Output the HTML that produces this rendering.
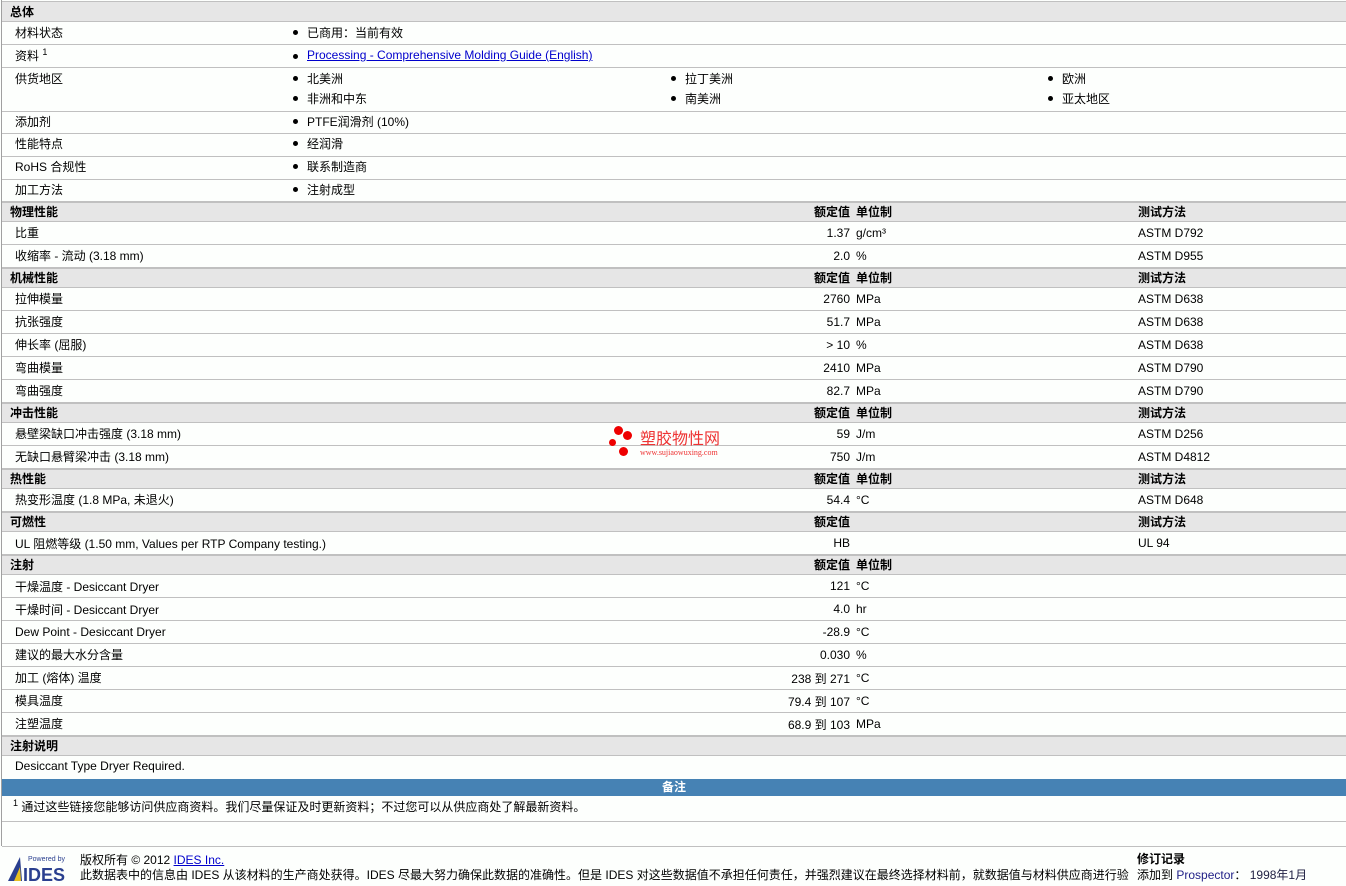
<!DOCTYPE html>
<html><head><meta charset="utf-8"><style>
body{margin:0;width:1346px;height:886px;overflow:hidden;background:#fdfffd;font-family:"Liberation Sans","Noto Sans CJK SC",sans-serif;font-size:12px;color:#000;position:relative}
.r{position:absolute;left:2px;width:1344px;border-bottom:1px solid #c0c0c0;box-sizing:border-box}
.h{background:#e6e6e6;font-weight:bold;border-top:1px solid #c0c0c0}
.t{position:absolute;white-space:nowrap;margin-top:-2px}
.v{position:absolute;right:496px;white-space:nowrap;text-align:right;margin-top:-2px}
.b::before{content:"";position:absolute;left:-14px;top:6px;width:5px;height:5px;border-radius:50%;background:#000}
a{color:#00c;text-decoration:underline}
#lb{position:absolute;left:1px;top:0;width:1px;height:846px;background:#a0a0a0}
</style></head><body>
<div id="lb"></div>
<div class="r h" style="top:1px;height:21px"><span class="t" style="left:8px;top:3px">总体</span></div>
<div class="r" style="top:22px;height:23px"><span class="t" style="left:13px;top:4px">材料状态</span><span class="t b" style="left:305px;top:4px">已商用：当前有效</span></div>
<div class="r" style="top:45px;height:23px"><span class="t" style="left:13px;top:4px">资料 <sup style="font-size:9px">1</sup></span><span class="t b" style="left:305px;top:5px"><a>Processing - Comprehensive Molding Guide (English)</a></span></div>
<div class="r" style="top:68px;height:44px"><span class="t" style="left:13px;top:4px">供货地区</span>
<span class="t b" style="left:305px;top:4px">北美洲</span><span class="t b" style="left:683px;top:4px">拉丁美洲</span><span class="t b" style="left:1060px;top:4px">欧洲</span>
<span class="t b" style="left:305px;top:24px">非洲和中东</span><span class="t b" style="left:683px;top:24px">南美洲</span><span class="t b" style="left:1060px;top:24px">亚太地区</span></div>
<div class="r" style="top:112px;height:22px"><span class="t" style="left:13px;top:3px">添加剂</span><span class="t b" style="left:305px;top:3px">PTFE润滑剂 (10%)</span></div>
<div class="r" style="top:134px;height:23px"><span class="t" style="left:13px;top:3px">性能特点</span><span class="t b" style="left:305px;top:3px">经润滑</span></div>
<div class="r" style="top:157px;height:23px"><span class="t" style="left:13px;top:3px">RoHS 合规性</span><span class="t b" style="left:305px;top:3px">联系制造商</span></div>
<div class="r" style="top:180px;height:22px"><span class="t" style="left:13px;top:3px">加工方法</span><span class="t b" style="left:305px;top:3px">注射成型</span></div>

<div class="r h" style="top:202px;height:20px"><span class="t" style="left:8px;top:2px">物理性能</span><span class="v" style="top:2px">额定值</span><span class="t" style="left:854px;top:2px">单位制</span><span class="t" style="left:1136px;top:2px">测试方法</span></div>
<div class="r" style="top:222px;height:23px"><span class="t" style="left:13px;top:4px">比重</span><span class="v" style="top:6px">1.37</span><span class="t" style="left:854px;top:6px">g/cm³</span><span class="t" style="left:1136px;top:6px">ASTM D792</span></div>
<div class="r" style="top:245px;height:23px"><span class="t" style="left:13px;top:4px">收缩率 - 流动 (3.18 mm)</span><span class="v" style="top:6px">2.0</span><span class="t" style="left:854px;top:6px">%</span><span class="t" style="left:1136px;top:6px">ASTM D955</span></div>

<div class="r h" style="top:268px;height:20px"><span class="t" style="left:8px;top:2px">机械性能</span><span class="v" style="top:2px">额定值</span><span class="t" style="left:854px;top:2px">单位制</span><span class="t" style="left:1136px;top:2px">测试方法</span></div>
<div class="r" style="top:288px;height:23px"><span class="t" style="left:13px;top:4px">拉伸模量</span><span class="v" style="top:6px">2760</span><span class="t" style="left:854px;top:6px">MPa</span><span class="t" style="left:1136px;top:6px">ASTM D638</span></div>
<div class="r" style="top:311px;height:23px"><span class="t" style="left:13px;top:4px">抗张强度</span><span class="v" style="top:6px">51.7</span><span class="t" style="left:854px;top:6px">MPa</span><span class="t" style="left:1136px;top:6px">ASTM D638</span></div>
<div class="r" style="top:334px;height:23px"><span class="t" style="left:13px;top:4px">伸长率 (屈服)</span><span class="v" style="top:6px">&gt; 10</span><span class="t" style="left:854px;top:6px">%</span><span class="t" style="left:1136px;top:6px">ASTM D638</span></div>
<div class="r" style="top:357px;height:23px"><span class="t" style="left:13px;top:4px">弯曲模量</span><span class="v" style="top:6px">2410</span><span class="t" style="left:854px;top:6px">MPa</span><span class="t" style="left:1136px;top:6px">ASTM D790</span></div>
<div class="r" style="top:380px;height:23px"><span class="t" style="left:13px;top:4px">弯曲强度</span><span class="v" style="top:6px">82.7</span><span class="t" style="left:854px;top:6px">MPa</span><span class="t" style="left:1136px;top:6px">ASTM D790</span></div>

<div class="r h" style="top:403px;height:20px"><span class="t" style="left:8px;top:2px">冲击性能</span><span class="v" style="top:2px">额定值</span><span class="t" style="left:854px;top:2px">单位制</span><span class="t" style="left:1136px;top:2px">测试方法</span></div>
<div class="r" style="top:423px;height:23px"><span class="t" style="left:13px;top:4px">悬壁梁缺口冲击强度 (3.18 mm)</span><span class="v" style="top:6px">59</span><span class="t" style="left:854px;top:6px">J/m</span><span class="t" style="left:1136px;top:6px">ASTM D256</span></div>
<div class="r" style="top:446px;height:23px"><span class="t" style="left:13px;top:4px">无缺口悬臂梁冲击 (3.18 mm)</span><span class="v" style="top:6px">750</span><span class="t" style="left:854px;top:6px">J/m</span><span class="t" style="left:1136px;top:6px">ASTM D4812</span></div>

<div class="r h" style="top:469px;height:20px"><span class="t" style="left:8px;top:2px">热性能</span><span class="v" style="top:2px">额定值</span><span class="t" style="left:854px;top:2px">单位制</span><span class="t" style="left:1136px;top:2px">测试方法</span></div>
<div class="r" style="top:489px;height:23px"><span class="t" style="left:13px;top:4px">热变形温度 (1.8 MPa, 未退火)</span><span class="v" style="top:6px">54.4</span><span class="t" style="left:854px;top:6px">°C</span><span class="t" style="left:1136px;top:6px">ASTM D648</span></div>

<div class="r h" style="top:512px;height:20px"><span class="t" style="left:8px;top:2px">可燃性</span><span class="v" style="top:2px">额定值</span><span class="t" style="left:1136px;top:2px">测试方法</span></div>
<div class="r" style="top:532px;height:23px"><span class="t" style="left:13px;top:5px">UL 阻燃等级 (1.50 mm, Values per RTP Company testing.)</span><span class="v" style="top:6px">HB</span><span class="t" style="left:1136px;top:6px">UL 94</span></div>

<div class="r h" style="top:555px;height:20px"><span class="t" style="left:8px;top:2px">注射</span><span class="v" style="top:2px">额定值</span><span class="t" style="left:854px;top:2px">单位制</span></div>
<div class="r" style="top:575px;height:23px"><span class="t" style="left:13px;top:5px">干燥温度 - Desiccant Dryer</span><span class="v" style="top:6px">121</span><span class="t" style="left:854px;top:6px">°C</span></div>
<div class="r" style="top:598px;height:23px"><span class="t" style="left:13px;top:5px">干燥时间 - Desiccant Dryer</span><span class="v" style="top:6px">4.0</span><span class="t" style="left:854px;top:6px">hr</span></div>
<div class="r" style="top:621px;height:23px"><span class="t" style="left:13px;top:6px">Dew Point - Desiccant Dryer</span><span class="v" style="top:6px">-28.9</span><span class="t" style="left:854px;top:6px">°C</span></div>
<div class="r" style="top:644px;height:23px"><span class="t" style="left:13px;top:4px">建议的最大水分含量</span><span class="v" style="top:6px">0.030</span><span class="t" style="left:854px;top:6px">%</span></div>
<div class="r" style="top:667px;height:23px"><span class="t" style="left:13px;top:4px">加工 (熔体) 温度</span><span class="v" style="top:5px">238 到 271</span><span class="t" style="left:854px;top:6px">°C</span></div>
<div class="r" style="top:690px;height:23px"><span class="t" style="left:13px;top:4px">模具温度</span><span class="v" style="top:5px">79.4 到 107</span><span class="t" style="left:854px;top:6px">°C</span></div>
<div class="r" style="top:713px;height:23px"><span class="t" style="left:13px;top:4px">注塑温度</span><span class="v" style="top:5px">68.9 到 103</span><span class="t" style="left:854px;top:6px">MPa</span></div>

<div class="r h" style="top:736px;height:20px"><span class="t" style="left:8px;top:2px">注射说明</span></div>
<div class="r" style="top:756px;height:23px;border-bottom:none"><span class="t" style="left:13px;top:5px">Desiccant Type Dryer Required.</span></div>
<div style="position:absolute;left:2px;top:779px;width:1344px;height:17px;background:#4682b4;color:#fff;font-weight:bold;text-align:center;line-height:16px">备注</div>
<div class="r" style="top:796px;height:26px"><span class="t" style="left:11px;top:4px"><sup style="font-size:9px">1</sup> 通过这些链接您能够访问供应商资料。我们尽量保证及时更新资料；不过您可以从供应商处了解最新资料。</span></div>
<div class="r" style="top:822px;height:25px"></div>

<div style="position:absolute;left:614px;top:426px;width:9px;height:9px;border-radius:50%;background:#e00"></div>
<div style="position:absolute;left:623px;top:431px;width:9px;height:9px;border-radius:50%;background:#e00"></div>
<div style="position:absolute;left:609px;top:439px;width:7px;height:7px;border-radius:50%;background:#e00"></div>
<div style="position:absolute;left:619px;top:447px;width:9px;height:9px;border-radius:50%;background:#e00"></div>
<span class="t" style="left:640px;top:430px;color:#e33;font-size:16px;font-family:'Noto Sans CJK SC',sans-serif;line-height:18px">塑胶物性网</span>
<span class="t" style="left:640px;top:450px;color:#e33;font-size:8px;font-family:'Liberation Serif',serif">www.sujiaowuxing.com</span>

<div style="position:absolute;left:6px;top:853px;width:64px;height:30px">
<svg width="64" height="30"><polygon points="2,28 14,4 16,28" fill="#2a3f8f"/><polygon points="8,28 14,14 15,28" fill="#e8c020"/><text x="22" y="8" font-size="7" fill="#2a3f8f" font-family="Liberation Sans">Powered by</text><text x="17" y="28" font-size="18" font-weight="bold" fill="#2a3f8f" font-family="Liberation Sans">IDES</text></svg></div>
<span class="t" style="left:80px;top:853px">版权所有 © 2012 <a>IDES Inc.</a></span>
<span class="t" style="left:80px;top:868px">此数据表中的信息由 IDES 从该材料的生产商处获得。IDES 尽最大努力确保此数据的准确性。但是 IDES 对这些数据值不承担任何责任，并强烈建议在最终选择材料前，就数据值与材料供应商进行验</span>
<span class="t" style="left:1137px;top:852px;font-weight:bold">修订记录</span>
<span class="t" style="left:1137px;top:868px">添加到 <span style="color:#228">Prospector</span>： <span style="color:#224">1998年1月</span></span>
</body></html>
